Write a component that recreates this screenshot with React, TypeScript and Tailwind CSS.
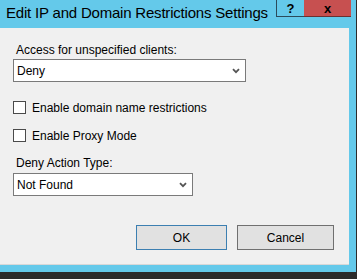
import React from "react";

function Chevron() {
  return (
    <svg width="8" height="6" viewBox="0 0 8 6" className="shrink-0">
      <path d="M1 1.2 L4 4.2 L7 1.2" fill="none" stroke="#555555" strokeWidth="1.8" />
    </svg>
  );
}

function Select({ value, width }: { value: string; width: string }) {
  return (
    <div
      className={`${width} h-[23px] flex items-center justify-between bg-white border border-[#7a7a7a] pl-[3px] pr-[5px] text-[12px] text-black`}
    >
      <span>{value}</span>
      <Chevron />
    </div>
  );
}

function Check({ label }: { label: string }) {
  return (
    <div className="flex items-center h-[13px]">
      <div className="w-[13px] h-[13px] bg-white border border-[#4a4a4a]" />
      <span className="ml-[6px] text-[12px] text-black">{label}</span>
    </div>
  );
}

export default function App() {
  return (
    <div
      className="w-[357px] h-[279px] bg-[#2b2b2b] overflow-hidden"
      style={{ fontFamily: '"Liberation Sans", Arial, sans-serif' }}
    >
      <div className="w-[356px] h-[272px] bg-[#64c9ea] flex flex-col">
        {/* Title bar */}
        <div className="h-[28px] flex items-start shrink-0">
          <div className="pl-[6px] pt-[3px] text-[15px] leading-[20px] tracking-[-0.2px] text-black flex-1">
            Edit IP and Domain Restrictions Settings
          </div>
          <div className="flex mr-[5px]">
            <div className="w-[28px] h-[17px] border-l border-b border-[#2b4b5b] flex items-center justify-center text-[13px] font-bold leading-none text-black">
              ?
            </div>
            <div className="w-[47px] h-[17px] bg-[#c75050] border-b border-[#6b3030] flex items-center justify-center text-[13px] font-bold leading-none text-black">
              x
            </div>
          </div>
        </div>

        {/* Client area */}
        <div className="w-[349px] h-[237px] bg-[#f0f0f0] border-b border-[#d8d8d8] flex flex-col text-black text-[12px]">
          <div className="pl-[16px] mt-[14px] leading-[16px]">Access for unspecified clients:</div>
          <div className="pl-[13px] mt-[1px]">
            <Select value="Deny" width="w-[233px]" />
          </div>
          <div className="pl-[13px] mt-[19px]">
            <Check label="Enable domain name restrictions" />
          </div>
          <div className="pl-[13px] mt-[15px]">
            <Check label="Enable Proxy Mode" />
          </div>
          <div className="pl-[16px] mt-[13px] leading-[16px]">Deny Action Type:</div>
          <div className="pl-[13px] mt-[2px]">
            <Select value="Not Found" width="w-[180px]" />
          </div>
          <div className="flex mt-[29px] pl-[136px] gap-[10px]">
            <div className="w-[91px] h-[25px] bg-[#e1e1e1] border border-[#3c7fb1] flex items-center justify-center">
              OK
            </div>
            <div className="w-[97px] h-[25px] bg-[#e1e1e1] border border-[#707070] flex items-center justify-center">
              Cancel
            </div>
          </div>
        </div>
      </div>
    </div>
  );
}
